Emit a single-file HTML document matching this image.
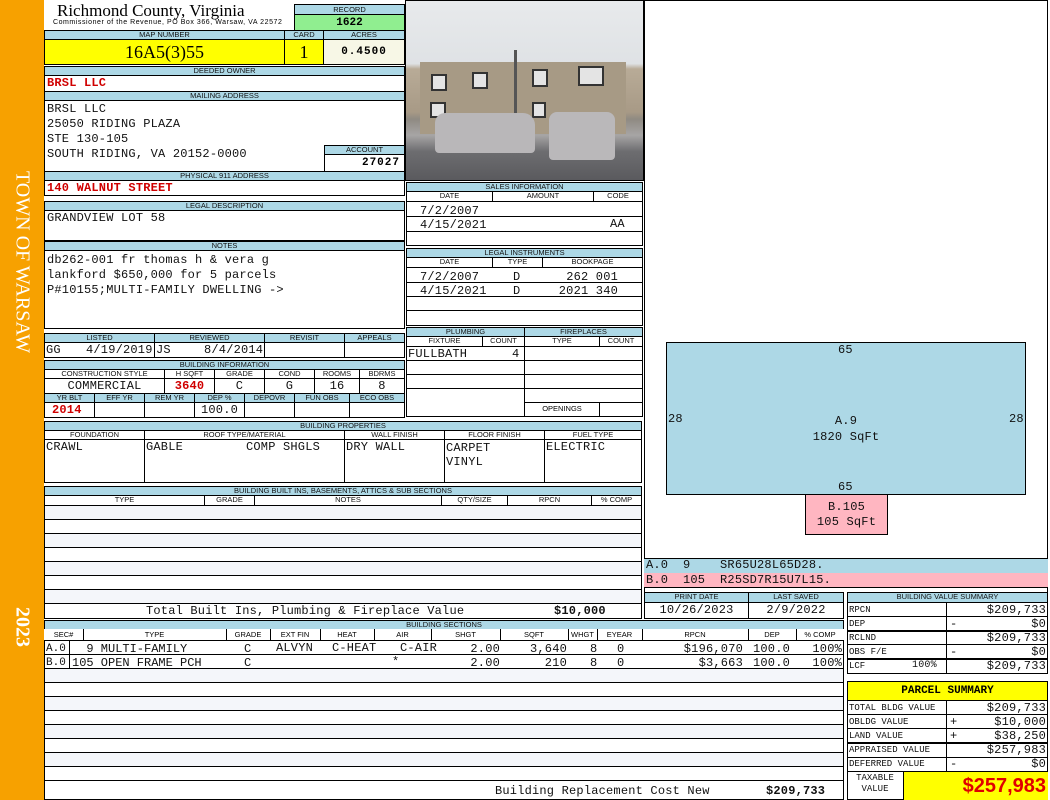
<!DOCTYPE html>
<html><head><meta charset="utf-8"><style>
*{margin:0;padding:0}
body{width:1050px;height:800px;position:relative;background:#fff;overflow:hidden;font-family:"Liberation Sans",sans-serif}
.a{position:absolute;box-sizing:border-box}
.lb{position:absolute;box-sizing:border-box;background:#add8e6;border:1px solid #000;font-size:7.5px;text-align:center;line-height:8px;color:#111;white-space:nowrap;overflow:hidden}
.bx{position:absolute;box-sizing:border-box;border:1px solid #000}
.m{position:absolute;font-family:"Liberation Mono",monospace;font-size:12px;letter-spacing:0.2px;line-height:13px;white-space:pre;color:#111}
.r{color:#d00000;font-weight:bold}
.hl{position:absolute;height:1px;background:#000}
.vl{position:absolute;width:1px;background:#000}
.row{position:absolute;box-sizing:border-box;border-bottom:1px solid #000;background:#f4f6fa}
</style></head><body>
<!-- sidebar -->
<div class="a" style="left:0;top:0;width:44px;height:800px;background:#f7a100"></div>
<div class="a" style="left:22px;top:262px;transform:translate(-50%,-50%) rotate(90deg);color:#fff;font:20px 'Liberation Serif',serif;white-space:nowrap">TOWN OF WARSAW</div>
<div class="a" style="left:22px;top:627px;transform:translate(-50%,-50%) rotate(90deg);color:#fff;font:bold 20px 'Liberation Serif',serif">2023</div>

<!-- header -->
<div class="a" style="left:57px;top:1px;font:17px 'Liberation Serif',serif;color:#000;line-height:20px">Richmond County, Virginia</div>
<div class="a" style="left:53px;top:19px;font:7px 'Liberation Sans',sans-serif;letter-spacing:0.55px;line-height:8px;white-space:nowrap">Commissioner of the Revenue, PO Box 366, Warsaw, VA 22572</div>
<div class="lb" style="left:294px;top:4px;width:111px;height:11px;line-height:10px">RECORD</div>
<div class="bx" style="left:294px;top:14px;width:111px;height:17px;background:#90ee90;font:bold 11px 'Liberation Mono',monospace;text-align:center;line-height:16px">1622</div>
<div class="lb" style="left:44px;top:30px;width:241px;height:10px">MAP NUMBER</div>
<div class="lb" style="left:284px;top:30px;width:40px;height:10px">CARD</div>
<div class="lb" style="left:323px;top:30px;width:82px;height:10px">ACRES</div>
<div class="bx" style="left:44px;top:39px;width:241px;height:26px;background:#ffff00;font:18px 'Liberation Serif',serif;text-align:center;line-height:25px">16A5(3)55</div>
<div class="bx" style="left:284px;top:39px;width:40px;height:26px;background:#ffff00;font:18px 'Liberation Serif',serif;text-align:center;line-height:25px">1</div>
<div class="bx" style="left:323px;top:39px;width:82px;height:26px;background:#f7f7e6;font:bold 11px 'Liberation Mono',monospace;text-align:center;line-height:25px;letter-spacing:1px">0.4500</div>
<div class="lb" style="left:44px;top:66px;width:361px;height:10px">DEEDED OWNER</div>
<div class="bx" style="left:44px;top:75px;width:361px;height:17px"></div>
<div class="m r" style="left:47px;top:77px">BRSL LLC</div>
<div class="lb" style="left:44px;top:91px;width:361px;height:10px">MAILING ADDRESS</div>
<div class="bx" style="left:44px;top:100px;width:361px;height:72px"></div>
<div class="m" style="left:47px;top:102px;line-height:15px">BRSL LLC
25050 RIDING PLAZA
STE 130-105
SOUTH RIDING, VA 20152-0000</div>
<div class="lb" style="left:324px;top:145px;width:81px;height:10px">ACCOUNT</div>
<div class="bx" style="left:324px;top:154px;width:81px;height:18px;font:bold 11px 'Liberation Mono',monospace;text-align:right;padding-right:4px;line-height:17px;letter-spacing:1px">27027</div>
<div class="lb" style="left:44px;top:171px;width:361px;height:10px">PHYSICAL 911 ADDRESS</div>
<div class="bx" style="left:44px;top:180px;width:361px;height:16px"></div>
<div class="m r" style="left:47px;top:182px">140 WALNUT STREET</div>

<!-- photo -->
<div class="a" style="left:405px;top:0;width:239px;height:181px;background:linear-gradient(#e8eaec 0%,#dfe2e5 35%,#b8ab97 38%,#a89a86 62%,#8f8a82 66%,#a7a5a5 75%,#6d6d70 84%,#5a5a5e 100%);border:1px solid #000"></div>
<div class="a" style="left:420px;top:62px;width:206px;height:72px;background:#a79a85"></div>
<div class="a" style="left:431px;top:74px;width:16px;height:17px;background:#e4e4e4;border:2px solid #333"></div>
<div class="a" style="left:472px;top:72px;width:16px;height:17px;background:#e4e4e4;border:2px solid #333"></div>
<div class="a" style="left:532px;top:69px;width:16px;height:18px;background:#e4e4e4;border:2px solid #333"></div>
<div class="a" style="left:578px;top:66px;width:26px;height:20px;background:#e4e4e4;border:2px solid #333"></div>
<div class="a" style="left:430px;top:102px;width:16px;height:16px;background:#e4e4e4;border:2px solid #333"></div>
<div class="a" style="left:532px;top:102px;width:14px;height:16px;background:#e4e4e4;border:2px solid #333"></div>
<div class="a" style="left:514px;top:50px;width:3px;height:80px;background:#555"></div>
<div class="a" style="left:435px;top:113px;width:100px;height:40px;background:#b9b7b9;border-radius:10px 12px 4px 4px"></div>
<div class="a" style="left:549px;top:112px;width:66px;height:48px;background:#bab8ba;border-radius:8px 8px 4px 4px"></div>

<!-- legal / notes -->
<div class="lb" style="left:44px;top:201px;width:361px;height:10px">LEGAL DESCRIPTION</div>
<div class="bx" style="left:44px;top:210px;width:361px;height:31px"></div>
<div class="m" style="left:47px;top:212px">GRANDVIEW LOT 58</div>
<div class="lb" style="left:44px;top:241px;width:361px;height:10px">NOTES</div>
<div class="bx" style="left:44px;top:250px;width:361px;height:79px"></div>
<div class="m" style="left:47px;top:253px;line-height:15px">db262-001 fr thomas h &amp; vera g
lankford $650,000 for 5 parcels
P#10155;MULTI-FAMILY DWELLING -&gt;</div>

<!-- listed -->
<div class="lb" style="left:44px;top:333px;width:111px;height:10px">LISTED</div>
<div class="lb" style="left:154px;top:333px;width:111px;height:10px">REVIEWED</div>
<div class="lb" style="left:264px;top:333px;width:81px;height:10px">REVISIT</div>
<div class="lb" style="left:344px;top:333px;width:61px;height:10px">APPEALS</div>
<div class="bx" style="left:44px;top:342px;width:361px;height:16px"></div>
<div class="vl" style="left:154px;top:342px;height:16px"></div><div class="vl" style="left:264px;top:342px;height:16px"></div><div class="vl" style="left:344px;top:342px;height:16px"></div>
<div class="m" style="left:46px;top:344px">GG</div><div class="m" style="left:86px;top:344px">4/19/2019</div>
<div class="m" style="left:156px;top:344px">JS</div><div class="m" style="left:204px;top:344px">8/4/2014</div>

<!-- building info -->
<div class="lb" style="left:44px;top:360px;width:361px;height:10px">BUILDING INFORMATION</div>
<div class="bx" style="left:44px;top:369px;width:361px;height:49px"></div>
<div class="lb" style="left:44px;top:369px;width:121px;height:10px;background:#fff">CONSTRUCTION STYLE</div>
<div class="lb" style="left:164px;top:369px;width:51px;height:10px;background:#fff">H SQFT</div>
<div class="lb" style="left:214px;top:369px;width:51px;height:10px;background:#fff">GRADE</div>
<div class="lb" style="left:264px;top:369px;width:51px;height:10px;background:#fff">COND</div>
<div class="lb" style="left:314px;top:369px;width:46px;height:10px;background:#fff">ROOMS</div>
<div class="lb" style="left:359px;top:369px;width:46px;height:10px;background:#fff">BDRMS</div>
<div class="vl" style="left:164px;top:378px;height:15px"></div><div class="vl" style="left:214px;top:378px;height:15px"></div><div class="vl" style="left:264px;top:378px;height:15px"></div><div class="vl" style="left:314px;top:378px;height:15px"></div><div class="vl" style="left:359px;top:378px;height:15px"></div>
<div class="m" style="left:44px;top:380px;width:121px;text-align:center">COMMERCIAL</div>
<div class="m r" style="left:164px;top:380px;width:51px;text-align:center">3640</div>
<div class="m" style="left:214px;top:380px;width:51px;text-align:center">C</div>
<div class="m" style="left:264px;top:380px;width:51px;text-align:center">G</div>
<div class="m" style="left:314px;top:380px;width:46px;text-align:center">16</div>
<div class="m" style="left:359px;top:380px;width:46px;text-align:center">8</div>
<div class="lb" style="left:44px;top:393px;width:51px;height:10px">YR BLT</div>
<div class="lb" style="left:94px;top:393px;width:51px;height:10px">EFF YR</div>
<div class="lb" style="left:144px;top:393px;width:51px;height:10px">REM YR</div>
<div class="lb" style="left:194px;top:393px;width:51px;height:10px">DEP %</div>
<div class="lb" style="left:244px;top:393px;width:51px;height:10px">DEPOVR</div>
<div class="lb" style="left:294px;top:393px;width:56px;height:10px">FUN OBS</div>
<div class="lb" style="left:349px;top:393px;width:56px;height:10px">ECO OBS</div>
<div class="vl" style="left:94px;top:402px;height:16px"></div><div class="vl" style="left:144px;top:402px;height:16px"></div><div class="vl" style="left:194px;top:402px;height:16px"></div><div class="vl" style="left:244px;top:402px;height:16px"></div><div class="vl" style="left:294px;top:402px;height:16px"></div><div class="vl" style="left:349px;top:402px;height:16px"></div>
<div class="m r" style="left:52px;top:404px">2014</div>
<div class="m" style="left:194px;top:404px;width:51px;text-align:center">100.0</div>

<!-- building properties -->
<div class="lb" style="left:44px;top:421px;width:598px;height:10px">BUILDING PROPERTIES</div>
<div class="bx" style="left:44px;top:430px;width:598px;height:53px"></div>
<div class="lb" style="left:44px;top:430px;width:101px;height:10px;background:#fff">FOUNDATION</div>
<div class="lb" style="left:144px;top:430px;width:201px;height:10px;background:#fff">ROOF TYPE/MATERIAL</div>
<div class="lb" style="left:344px;top:430px;width:101px;height:10px;background:#fff">WALL FINISH</div>
<div class="lb" style="left:444px;top:430px;width:101px;height:10px;background:#fff">FLOOR FINISH</div>
<div class="lb" style="left:544px;top:430px;width:98px;height:10px;background:#fff">FUEL TYPE</div>
<div class="vl" style="left:144px;top:439px;height:44px"></div><div class="vl" style="left:344px;top:439px;height:44px"></div><div class="vl" style="left:444px;top:439px;height:44px"></div><div class="vl" style="left:544px;top:439px;height:44px"></div>
<div class="m" style="left:46px;top:441px">CRAWL</div>
<div class="m" style="left:146px;top:441px">GABLE</div><div class="m" style="left:246px;top:441px">COMP SHGLS</div>
<div class="m" style="left:346px;top:441px">DRY WALL</div>
<div class="m" style="left:446px;top:441px;line-height:14px">CARPET
VINYL</div>
<div class="m" style="left:546px;top:441px">ELECTRIC</div>

<!-- built ins -->
<div class="lb" style="left:44px;top:486px;width:598px;height:10px">BUILDING BUILT INS, BASEMENTS, ATTICS &amp; SUB SECTIONS</div>
<div class="bx" style="left:44px;top:495px;width:598px;height:124px"></div>
<div class="lb" style="left:44px;top:495px;width:161px;height:11px;background:#fff">TYPE</div>
<div class="lb" style="left:204px;top:495px;width:51px;height:11px;background:#fff">GRADE</div>
<div class="lb" style="left:254px;top:495px;width:188px;height:11px;background:#fff">NOTES</div>
<div class="lb" style="left:441px;top:495px;width:67px;height:11px;background:#fff">QTY/SIZE</div>
<div class="lb" style="left:507px;top:495px;width:85px;height:11px;background:#fff">RPCN</div>
<div class="lb" style="left:591px;top:495px;width:51px;height:11px;background:#fff">% COMP</div>
<div class="row" style="left:45px;top:506px;width:596px;height:14px"></div>
<div class="row" style="left:45px;top:520px;width:596px;height:14px;background:#fff"></div>
<div class="row" style="left:45px;top:534px;width:596px;height:14px"></div>
<div class="row" style="left:45px;top:548px;width:596px;height:14px;background:#fff"></div>
<div class="row" style="left:45px;top:562px;width:596px;height:14px"></div>
<div class="row" style="left:45px;top:576px;width:596px;height:14px;background:#fff"></div>
<div class="row" style="left:45px;top:590px;width:596px;height:14px"></div>
<div class="m" style="left:146px;top:605px">Total Built Ins, Plumbing &amp; Fireplace Value</div>
<div class="m" style="left:554px;top:605px;font-weight:bold">$10,000</div>

<!-- sales -->
<div class="lb" style="left:406px;top:182px;width:237px;height:10px">SALES INFORMATION</div>
<div class="bx" style="left:406px;top:191px;width:237px;height:55px"></div>
<div class="lb" style="left:406px;top:191px;width:87px;height:11px;background:#fff">DATE</div>
<div class="lb" style="left:492px;top:191px;width:102px;height:11px;background:#fff">AMOUNT</div>
<div class="lb" style="left:593px;top:191px;width:50px;height:11px;background:#fff">CODE</div>
<div class="hl" style="left:406px;top:216px;width:237px"></div><div class="hl" style="left:406px;top:231px;width:237px"></div>
<div class="m" style="left:420px;top:204px;line-height:14px">7/2/2007
4/15/2021</div>
<div class="m" style="left:610px;top:218px">AA</div>
<div class="lb" style="left:406px;top:248px;width:237px;height:10px">LEGAL INSTRUMENTS</div>
<div class="bx" style="left:406px;top:257px;width:237px;height:69px"></div>
<div class="lb" style="left:406px;top:257px;width:87px;height:11px;background:#fff">DATE</div>
<div class="lb" style="left:492px;top:257px;width:51px;height:11px;background:#fff">TYPE</div>
<div class="lb" style="left:542px;top:257px;width:101px;height:11px;background:#fff">BOOKPAGE</div>
<div class="hl" style="left:406px;top:282px;width:237px"></div><div class="hl" style="left:406px;top:296px;width:237px"></div><div class="hl" style="left:406px;top:310px;width:237px"></div>
<div class="m" style="left:420px;top:270px;line-height:14px">7/2/2007
4/15/2021</div>
<div class="m" style="left:513px;top:270px;line-height:14px">D
D</div>
<div class="m" style="left:540px;top:270px;width:78px;text-align:right;line-height:14px">262 001
2021 340</div>

<!-- plumbing -->
<div class="lb" style="left:406px;top:327px;width:119px;height:10px">PLUMBING</div>
<div class="lb" style="left:524px;top:327px;width:119px;height:10px">FIREPLACES</div>
<div class="bx" style="left:406px;top:336px;width:237px;height:81px"></div>
<div class="lb" style="left:406px;top:336px;width:77px;height:11px;background:#fff">FIXTURE</div>
<div class="lb" style="left:482px;top:336px;width:43px;height:11px;background:#fff">COUNT</div>
<div class="lb" style="left:524px;top:336px;width:76px;height:11px;background:#fff">TYPE</div>
<div class="lb" style="left:599px;top:336px;width:44px;height:11px;background:#fff">COUNT</div>
<div class="vl" style="left:524px;top:346px;height:71px"></div>
<div class="hl" style="left:406px;top:360px;width:237px"></div><div class="hl" style="left:406px;top:374px;width:237px"></div><div class="hl" style="left:406px;top:388px;width:237px"></div><div class="hl" style="left:524px;top:402px;width:119px"></div>
<div class="vl" style="left:599px;top:402px;height:15px"></div>
<div class="m" style="left:408px;top:348px">FULLBATH</div><div class="m" style="left:512px;top:348px">4</div>
<div class="a" style="left:524px;top:404px;width:76px;text-align:center;font-size:7.5px">OPENINGS</div>

<!-- right panel -->
<div class="vl" style="left:644px;top:0;height:592px"></div>
<div class="vl" style="left:1047px;top:0;height:592px"></div>
<div class="hl" style="left:644px;top:0;width:404px"></div>
<div class="bx" style="left:666px;top:342px;width:360px;height:153px;background:#add8e6"></div>
<div class="m" style="left:838px;top:344px">65</div>
<div class="m" style="left:838px;top:481px">65</div>
<div class="m" style="left:668px;top:413px">28</div>
<div class="m" style="left:1009px;top:413px">28</div>
<div class="m" style="left:666px;top:413px;width:360px;text-align:center;line-height:16px">A.9
1820 SqFt</div>
<div class="bx" style="left:805px;top:494px;width:83px;height:41px;background:#ffb6c1"></div>
<div class="m" style="left:805px;top:500px;width:83px;text-align:center;line-height:15px">B.105
105 SqFt</div>
<div class="a" style="left:644px;top:558px;width:404px;height:15px;background:#add8e6;border-top:1px solid #000"></div>
<div class="a" style="left:644px;top:573px;width:404px;height:15px;background:#ffb6c1;border-bottom:1px solid #000"></div>
<div class="m" style="left:646px;top:559px;font-size:12px">A.0  9    SR65U28L65D28.</div>
<div class="m" style="left:646px;top:574px;font-size:12px">B.0  105  R25SD7R15U7L15.</div>

<!-- print date -->
<div class="lb" style="left:644px;top:592px;width:105px;height:11px">PRINT DATE</div>
<div class="lb" style="left:748px;top:592px;width:96px;height:11px">LAST SAVED</div>
<div class="bx" style="left:644px;top:602px;width:200px;height:17px"></div>
<div class="vl" style="left:748px;top:602px;height:17px"></div>
<div class="m" style="left:644px;top:604px;width:105px;text-align:center">10/26/2023</div>
<div class="m" style="left:748px;top:604px;width:96px;text-align:center">2/9/2022</div>

<!-- building sections -->
<div class="lb" style="left:44px;top:620px;width:800px;height:10px">BUILDING SECTIONS</div>
<div class="bx" style="left:44px;top:629px;width:800px;height:171px"></div>
<div class="a" style="left:44px;top:629px;width:800px;height:12px;border-bottom:1px solid #000;background:#fff"></div>
<div class="a" style="left:44px;top:629px;font-size:7.5px;line-height:12px;width:800px">
<span class="a" style="left:0;width:39px;text-align:center">SEC#</span>
<span class="a" style="left:39px;width:143px;text-align:center">TYPE</span>
<span class="a" style="left:182px;width:44px;text-align:center">GRADE</span>
<span class="a" style="left:226px;width:50px;text-align:center">EXT FIN</span>
<span class="a" style="left:276px;width:54px;text-align:center">HEAT</span>
<span class="a" style="left:330px;width:57px;text-align:center">AIR</span>
<span class="a" style="left:387px;width:69px;text-align:center">SHGT</span>
<span class="a" style="left:456px;width:68px;text-align:center">SQFT</span>
<span class="a" style="left:524px;width:29px;text-align:center">WHGT</span>
<span class="a" style="left:553px;width:45px;text-align:center">EYEAR</span>
<span class="a" style="left:598px;width:106px;text-align:center">RPCN</span>
<span class="a" style="left:704px;width:48px;text-align:center">DEP</span>
<span class="a" style="left:752px;width:48px;text-align:center">% COMP</span>
</div>
<div class="vl" style="left:83px;top:629px;height:12px"></div><div class="vl" style="left:226px;top:629px;height:12px"></div><div class="vl" style="left:270px;top:629px;height:12px"></div><div class="vl" style="left:320px;top:629px;height:12px"></div><div class="vl" style="left:374px;top:629px;height:12px"></div><div class="vl" style="left:431px;top:629px;height:12px"></div><div class="vl" style="left:500px;top:629px;height:12px"></div><div class="vl" style="left:568px;top:629px;height:12px"></div><div class="vl" style="left:597px;top:629px;height:12px"></div><div class="vl" style="left:642px;top:629px;height:12px"></div><div class="vl" style="left:748px;top:629px;height:12px"></div><div class="vl" style="left:796px;top:629px;height:12px"></div>
<div class="row" style="left:45px;top:641px;width:798px;height:14px;background:#fff"></div>
<div class="row" style="left:45px;top:655px;width:798px;height:14px;background:#fff"></div>
<div class="row" style="left:45px;top:669px;width:798px;height:14px"></div>
<div class="row" style="left:45px;top:683px;width:798px;height:14px;background:#fff"></div>
<div class="row" style="left:45px;top:697px;width:798px;height:14px"></div>
<div class="row" style="left:45px;top:711px;width:798px;height:14px;background:#fff"></div>
<div class="row" style="left:45px;top:725px;width:798px;height:14px"></div>
<div class="row" style="left:45px;top:739px;width:798px;height:14px;background:#fff"></div>
<div class="row" style="left:45px;top:753px;width:798px;height:14px"></div>
<div class="row" style="left:45px;top:767px;width:798px;height:14px;background:#fff"></div>
<div class="vl" style="left:69px;top:641px;height:28px"></div>
<div class="m" style="left:46px;top:642px;line-height:14px;font-size:11px;letter-spacing:0">A.0
B.0</div>
<div class="m" style="left:72px;top:642px;line-height:14px;letter-spacing:0">  9 MULTI-FAMILY
105 OPEN FRAME PCH</div>
<div class="m" style="left:244px;top:642px;line-height:14px">C
C</div>
<div class="m" style="left:276px;top:642px">ALVYN</div>
<div class="m" style="left:332px;top:642px">C-HEAT</div>
<div class="m" style="left:400px;top:642px">C-AIR</div>
<div class="m" style="left:392px;top:656px">*</div>
<div class="m" style="left:440px;top:642px;width:60px;text-align:right;line-height:14px">2.00
2.00</div>
<div class="m" style="left:500px;top:642px;width:67px;text-align:right;line-height:14px">3,640
210</div>
<div class="m" style="left:590px;top:642px;line-height:14px">8
8</div>
<div class="m" style="left:617px;top:642px;line-height:14px">0
0</div>
<div class="m" style="left:642px;top:642px;width:101px;text-align:right;line-height:14px">$196,070
$3,663</div>
<div class="m" style="left:753px;top:642px;line-height:14px">100.0
100.0</div>
<div class="m" style="left:796px;top:642px;width:46px;text-align:right;line-height:14px">100%
100%</div>
<div class="m" style="left:495px;top:785px">Building Replacement Cost New</div>
<div class="m" style="left:766px;top:785px;font-weight:bold">$209,733</div>

<!-- building value summary -->
<div class="lb" style="left:847px;top:592px;width:201px;height:11px">BUILDING VALUE SUMMARY</div>
<div class="bx" style="left:847px;top:602px;width:201px;height:72px"></div>
<div class="vl" style="left:946px;top:602px;height:72px"></div>
<div class="hl" style="left:847px;top:616px;width:201px"></div><div class="hl" style="left:847px;top:630px;width:201px;height:2px"></div><div class="hl" style="left:847px;top:644px;width:201px"></div><div class="hl" style="left:847px;top:658px;width:201px;height:2px"></div>
<div class="m" style="left:849px;top:603px;font-size:9px;letter-spacing:0;line-height:14px">RPCN
DEP
RCLND
OBS F/E
LCF</div>
<div class="m" style="left:912px;top:659px;font-size:10px">100%</div>
<div class="m" style="left:950px;top:603px;line-height:14px"> 
-
 
-</div>
<div class="m" style="left:946px;top:603px;width:100px;text-align:right;line-height:14px">$209,733
$0
$209,733
$0
$209,733</div>

<!-- parcel summary -->
<div class="bx" style="left:847px;top:681px;width:201px;height:20px;background:#ffff00;font:bold 11px 'Liberation Mono',monospace;text-align:center;line-height:19px">PARCEL SUMMARY</div>
<div class="bx" style="left:847px;top:700px;width:201px;height:100px"></div>
<div class="vl" style="left:946px;top:700px;height:72px"></div>
<div class="hl" style="left:847px;top:714px;width:201px"></div><div class="hl" style="left:847px;top:728px;width:201px"></div><div class="hl" style="left:847px;top:742px;width:201px;height:2px"></div><div class="hl" style="left:847px;top:757px;width:201px"></div><div class="hl" style="left:847px;top:771px;width:201px"></div>
<div class="m" style="left:849px;top:701px;font-size:9px;letter-spacing:0;line-height:14px">TOTAL BLDG VALUE
OBLDG VALUE
LAND VALUE
APPRAISED VALUE
DEFERRED VALUE</div>
<div class="m" style="left:950px;top:701px;line-height:14px"> 
+
+
 
-</div>
<div class="m" style="left:946px;top:701px;width:100px;text-align:right;line-height:14px">$209,733
$10,000
$38,250
$257,983
$0</div>
<div class="m" style="left:849px;top:773px;width:52px;text-align:center;font-size:9px;letter-spacing:0;line-height:11px">TAXABLE
VALUE</div>
<div class="a" style="left:903px;top:772px;width:145px;height:28px;background:#ffff00;border-left:1px solid #000;color:#e00000;font:bold 20px 'Liberation Sans',sans-serif;text-align:right;padding-right:2px;line-height:28px">$257,983</div>
</body></html>
